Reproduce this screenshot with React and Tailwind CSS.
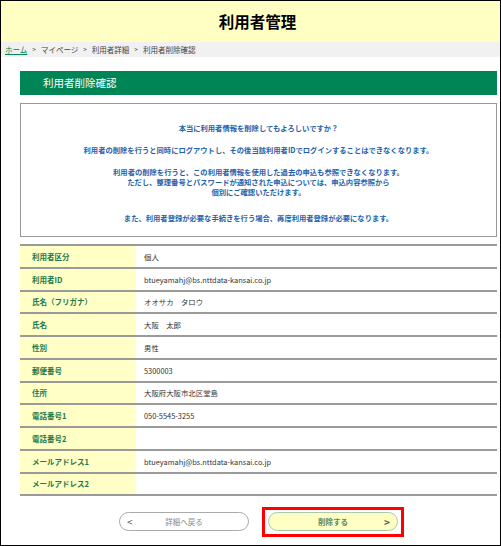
import React from 'react';

const rows = [
  ['利用者区分', '個人'],
  ['利用者ID', 'btueyamahj@bs.nttdata-kansai.co.jp'],
  ['氏名（フリガナ）', 'オオサカ　タロウ'],
  ['氏名', '大阪　太郎'],
  ['性別', '男性'],
  ['郵便番号', '5300003'],
  ['住所', '大阪府大阪市北区堂島'],
  ['電話番号1', '050-5545-3255'],
  ['電話番号2', ''],
  ['メールアドレス1', 'btueyamahj@bs.nttdata-kansai.co.jp'],
  ['メールアドレス2', ''],
];

const App = () => {
  return (
    <div
      className="w-[501px] h-[546px] border border-black bg-white overflow-hidden"
      style={{ fontFamily: '"Noto Sans CJK JP", "Noto Sans", sans-serif' }}
    >
      {/* Header */}
      <div className="h-[41px] bg-[#ffffc4] flex items-center justify-center pl-[14px]">
        <h1 className="text-[15.5px] font-bold text-black">利用者管理</h1>
      </div>

      {/* Breadcrumb */}
      <div className="h-[15px] bg-[#f1f1f1] flex items-center pl-[4px] text-[7.5px] text-[#444]">
        <a className="text-[#008556] underline">ホーム</a>
        <span className="mx-[5px] text-[6.5px]">&gt;</span>
        <span>マイページ</span>
        <span className="mx-[5px] text-[6.5px]">&gt;</span>
        <span>利用者詳細</span>
        <span className="mx-[5px] text-[6.5px]">&gt;</span>
        <span>利用者削除確認</span>
      </div>

      <div className="pl-[19px] pr-[3px] pt-[14px]">
        {/* Section title */}
        <div className="h-[24px] bg-[#008556] flex items-center pl-[23px] text-white text-[10.5px]">
          利用者削除確認
        </div>

        {/* Message */}
        <div className="mt-[8px] h-[134px] border border-[#999] pt-[19px] text-center text-[7.3px] leading-[10px] font-bold text-[#1f62ab]">
          <p>本当に利用者情報を削除してもよろしいですか？</p>
          <p className="mt-[12px]">利用者の削除を行うと同時にログアウトし、その後当該利用者IDでログインすることはできなくなります。</p>
          <p className="mt-[12px]">
            利用者の削除を行うと、この利用者情報を使用した過去の申込も参照できなくなります。
            <br />
            ただし、整理番号とパスワードが通知された申込については、申込内容参照から
            <br />
            個別にご確認いただけます。
          </p>
          <p className="mt-[16px]">また、利用者登録が必要な手続きを行う場合、再度利用者登録が必要になります。</p>
        </div>

        {/* Details table */}
        <div className="mt-[7px] border-t-2 border-[#9a9a9a]">
          {rows.map(([label, value]) => (
            <div key={label} className="flex h-[22.75px] border-b-2 border-[#9a9a9a]">
              <div className="w-[116px] bg-[#ffffc6] flex items-center pl-[12px] text-[7.5px] font-bold text-[#1c7a4c]">
                {label}
              </div>
              <div className="flex-1 flex items-center pl-[8px] text-[7.4px] text-[#333]">
                {value}
              </div>
            </div>
          ))}
        </div>
      </div>

      {/* Buttons */}
      <div className="flex items-start pl-[118px] mt-[11px]">
        <button className="mt-[5px] w-[130px] h-[19px] rounded-full border border-[#aaa] bg-white relative flex items-center justify-center text-[7.5px] text-[#888]">
          <span className="absolute left-[7px] text-[10px] leading-none text-[#555]">&lt;</span>
          詳細へ戻る
        </button>
        <div className="ml-[13px] border-[3px] border-[#ff0000] px-[3px] pt-[2px] pb-[3px]">
          <button className="w-[130px] h-[19px] rounded-full border border-[#a9c8ab] bg-[#ffffc4] relative flex items-center justify-center text-[7.5px] font-bold text-[#4f8a66]">
            削除する
            <span className="absolute right-[7px] text-[10px] leading-none text-[#3d6e52]">&gt;</span>
          </button>
        </div>
      </div>
    </div>
  );
};

export default App;
